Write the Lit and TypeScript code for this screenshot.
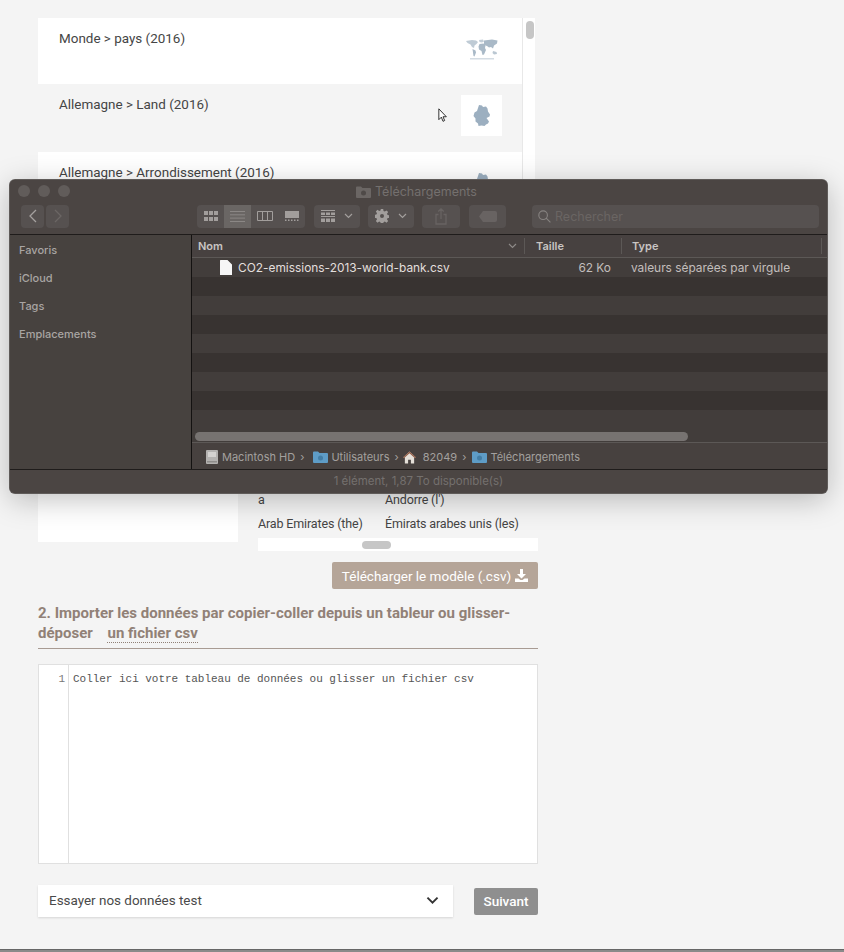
import { css, html, LitElement, svg } from "lit";
import { customElement } from "lit/decorators.js";

const MAP_ROWS = [
  { label: "Monde > pays (2016)", kind: "world", hover: false },
  { label: "Allemagne > Land (2016)", kind: "germany", hover: true },
  { label: "Allemagne > Arrondissement (2016)", kind: "germany", hover: false },
];

const SIDEBAR = ["Favoris", "iCloud", "Tags", "Emplacements"];

const world = svg`<svg class="soft" width="34" height="21" viewBox="0 0 34 21">
  <g fill="#a9b9c7">
    <path d="M1 2l6-1 4 .5 2 1.500-1.500 2-2 1.500-.5 2.500-2-1-1.500-2.500-3-1.500z" opacity=".75"/>
    <path d="M7.500 10l3 1.500.5 2-1.500 4-1-.5-.5-3.500z"/>
    <path d="M14 1l4-.5 1 2-2 1-2.500-.5z" opacity=".7"/>
    <path d="M14.500 5l4-.5 2 2-.5 2.500 1 2-2 4.500-1.500.5-1-4-2.500-1.500-.5-3z"/>
    <path d="M19 1.500l8-1 5.500 1-.5 3-3 2-1 3-2-1.500-2 .5-2-1.500-3-1z"/>
    <path d="M28 12l3.500 1 .5 2-3 .5-1.500-1.500z" opacity=".8"/>
    <rect x="5" y="19" width="24" height="1.500" opacity=".5"/>
  </g>
</svg>`;

const germany = svg`<svg class="soft" width="18" height="22" viewBox="0 0 18 22">
  <path fill="#9cafc0" d="M6 0l3 .5 1 1.500 3-.5 1.500 2 .5 3 2 3-.5 2-3 1.500 2.500 3.500-1 2-2 1-1.500 1.500-3-.5-3 .5-.5-2.500-2.500-2v-3L.5 11l1-3.500L4 6z"/>
</svg>`;

const cursor = svg`<svg width="10" height="15" viewBox="0 0 12 18">
  <path fill="#fff" stroke="#222" stroke-width="1.100" d="M1 1v13l3-3 2 5 2-1-2-4.500h4z"/>
</svg>`;

const chevron = (color: string, w = 9, h = 6, sw = 1.2) => svg`<svg width="${w}" height="${h}" viewBox="0 0 9 6">
  <path fill="none" stroke="${color}" stroke-width="${sw}" d="M1 1l3.500 3.500L8 1"/>
</svg>`;

const gridIcon = svg`<svg width="14" height="10" viewBox="0 0 14 10"><g fill="#a29e9c">
  <rect width="4" height="4"/><rect x="5" width="4" height="4"/><rect x="10" width="4" height="4"/>
  <rect y="6" width="4" height="4"/><rect x="5" y="6" width="4" height="4"/><rect x="10" y="6" width="4" height="4"/>
</g></svg>`;

const listIcon = svg`<svg width="15" height="11" viewBox="0 0 15 11"><g fill="#8b8785">
  <rect width="15" height="1"/><rect y="3.300" width="15" height="1"/><rect y="6.600" width="15" height="1"/><rect y="10" width="15" height="1"/>
</g></svg>`;

const columnsIcon = svg`<svg width="16" height="10" viewBox="0 0 16 10"><path fill="none" stroke="#a29e9c" d="M.5.500h15v9H.500zM5.500.500v9M10.500.500v9"/></svg>`;

const galleryIcon = svg`<svg width="14" height="10" viewBox="0 0 14 10"><g fill="#a29e9c">
  <rect width="14" height="7"/><rect y="8.500" width="1.500" height="1.500"/><rect x="3" y="8.500" width="1.500" height="1.500"/>
  <rect x="6" y="8.500" width="1.500" height="1.500"/><rect x="9" y="8.500" width="1.500" height="1.500"/><rect x="12" y="8.500" width="1.500" height="1.500"/>
</g></svg>`;

const groupIcon = svg`<svg width="14" height="13" viewBox="0 0 14 13"><g fill="#a29e9c">
  <rect width="14" height="1"/>
  <rect y="2.500" width="4" height="2.500"/><rect x="5" y="2.500" width="4" height="2.500"/><rect x="10" y="2.500" width="4" height="2.500"/>
  <rect y="6" width="14" height="1"/>
  <rect y="8.500" width="4" height="3.500"/><rect x="5" y="8.500" width="4" height="3.500"/><rect x="10" y="8.500" width="4" height="3.500"/>
</g></svg>`;

const gearIcon = svg`<svg width="14" height="14" viewBox="0 0 14 14">
  <path fill="#a29e9c" fill-rule="evenodd" d="M5.800 0h2.400l.3 2 1.300.6 1.700-1.200 1.700 1.700-1.200 1.700.6 1.300 2 .3v2.400l-2 .3-.6 1.300 1.200 1.700-1.700 1.700-1.700-1.200-1.300.6-.3 2H5.800l-.3-2-1.300-.6-1.700 1.200-1.700-1.700 1.200-1.700-.6-1.300-2-.3V5.800l2-.3.6-1.300-1.200-1.700 1.700-1.700 1.700 1.200 1.300-.6zM7 5a2 2 0 100 4 2 2 0 000-4z"/>
</svg>`;

const shareIcon = svg`<svg width="12" height="17" viewBox="0 0 12 17">
  <path fill="none" stroke="#686362" stroke-width="1.300" d="M3.500 6.500H1v9.500h10V6.500H8.500M6 11V1M3.200 3.600L6 1l2.800 2.600"/>
</svg>`;

const tagIcon = svg`<svg width="18" height="11" viewBox="0 0 18 11">
  <path fill="#686362" d="M4 0h12a2 2 0 012 2v7a2 2 0 01-2 2H4L0 5.500z"/>
</svg>`;

const searchIcon = svg`<svg width="13" height="13" viewBox="0 0 13 13">
  <path fill="none" stroke="#878381" stroke-width="1.100" d="M8.400 8.400l4 4M9.400 5.200a4.300 4.300 0 11-8.600 0 4.300 4.300 0 018.600 0z"/>
</svg>`;

const folder = (color: string, mark: string) => svg`<svg width="15" height="12" viewBox="0 0 15 12">
  <path fill="${color}" d="M0 1.500A1 1 0 011 .5h4l1.500 1.500H14a1 1 0 011 1V11a1 1 0 01-1 1H1a1 1 0 01-1-1z"/>
  <circle cx="7.500" cy="7" r="2.500" fill="${mark}"/>
</svg>`;

const diskIcon = svg`<svg width="14" height="14" viewBox="0 0 14 14">
  <rect x="1" y="0" width="12" height="14" rx="1" fill="#b4b2b0"/>
  <rect x="3" y="2" width="8" height="5" fill="#d4d2d0"/>
  <rect x="2" y="11" width="10" height="1.500" fill="#8e8c8a"/>
</svg>`;

const homeIcon = svg`<svg class="home" width="13" height="13" viewBox="0 0 14 13">
  <path fill="#e4dfd8" d="M7 0l7 6.500h-2V13H8.500V9h-3v4H2V6.500H0z"/>
  <path fill="#8f5a44" d="M7 0l7 6.500-1 .7L7 2 1 7.200 0 6.500z"/>
</svg>`;

const fileIcon = svg`<svg width="12" height="15" viewBox="0 0 12 15">
  <path fill="#f6f6f6" d="M0 .500A.5.5 0 01.5 0h7L12 4.500V14.500a.5.5 0 01-.5.5H.5a.5.5 0 01-.5-.5z"/>
</svg>`;

const downloadIcon = svg`<svg width="13" height="13" viewBox="0 0 13 13">
  <path fill="#fff" d="M5 0h3v5h3L6.500 9.500 2 5h3zM0 9.500h3.500l2 1.500h2l2-1.500H13V13H0z"/>
</svg>`;

@customElement("app-root")
export class AppRoot extends LitElement {
  private renderMapRow(row: (typeof MAP_ROWS)[number]) {
    return html`<div class="map-row ${row.hover ? "hover" : ""}">
      <span>${row.label}</span>
      ${row.hover ? html`<span class="cursor">${cursor}</span>` : ""}
      <div class="thumb">${row.kind === "world" ? world : germany}</div>
    </div>`;
  }

  private renderFinder() {
    const stripes = Array.from({ length: 8 }, (_, i) => i);
    return html`<section class="finder">
      <header class="finder-top">
        <div class="title-row">
          <div class="lights"><i></i><i></i><i></i></div>
          <div class="title">${folder("#6b6664", "#4f4a48")}<span>Téléchargements</span></div>
        </div>
        <div class="toolbar">
          <div class="nav">
            <div class="tool nav-btn"><svg width="8" height="14" viewBox="0 0 8 14"><path fill="none" stroke="#a5a19f" stroke-width="1.300" d="M7 1L1 7l6 6"/></svg></div>
            <div class="tool nav-btn"><svg width="8" height="14" viewBox="0 0 8 14"><path fill="none" stroke="#6b6664" stroke-width="1.300" d="M1 1l6 6-6 6"/></svg></div>
          </div>
          <div class="tool views">
            <div>${gridIcon}</div>
            <div class="on">${listIcon}</div>
            <div>${columnsIcon}</div>
            <div>${galleryIcon}</div>
          </div>
          <div class="tool menu">${groupIcon}${chevron("#a29e9c")}</div>
          <div class="tool menu">${gearIcon}${chevron("#a29e9c")}</div>
          <div class="tool share">${shareIcon}</div>
          <div class="tool tag">${tagIcon}</div>
          <div class="tool search">${searchIcon}<span>Rechercher</span></div>
        </div>
      </header>
      <div class="finder-body">
        <nav class="sidebar">${SIDEBAR.map((s) => html`<div>${s}</div>`)}</nav>
        <div class="finder-main">
          <div class="cols">
            <div class="col-name"><span>Nom</span>${chevron("#8d8987")}</div>
            <div class="col-size">Taille</div>
            <div class="col-type">Type</div>
          </div>
          <div class="rows">
            <div class="file">
              <div class="file-name">${fileIcon}<span>CO2-emissions-2013-world-bank.csv</span></div>
              <div class="file-size">62 Ko</div>
              <div class="file-type">valeurs séparées par virgule</div>
            </div>
            ${stripes.map((i) => html`<div class="stripe ${i % 2 ? "light" : ""}"></div>`)}
          </div>
          <div class="hscroll"><div></div></div>
          <div class="path">
            ${diskIcon}<span>Macintosh HD</span><b>›</b>
            ${folder("#5e9cc6", "#437ea6")}<span>Utilisateurs</span><b>›</b>
            ${homeIcon}<span>82049</span><b>›</b>
            ${folder("#5e9cc6", "#437ea6")}<span>Téléchargements</span>
          </div>
        </div>
      </div>
      <footer class="status">1 élément, 1,87 To disponible(s)</footer>
    </section>`;
  }

  render() {
    return html`<main class="col">
        <div class="map-list">
          <div class="map-rows">${MAP_ROWS.map((r) => this.renderMapRow(r))}</div>
          <div class="vscroll"><div></div></div>
        </div>
        <div class="templates">
          <div class="side-box"></div>
          <div class="table">
            <div class="tr"><span>a</span><span>Andorre (l')</span></div>
            <div class="tr"><span>Arab Emirates (the)</span><span>Émirats arabes unis (les)</span></div>
            <div class="table-scroll"><div></div></div>
          </div>
        </div>
        <div class="dl-row"><button class="dl">Télécharger le modèle (.csv) ${downloadIcon}</button></div>
        <h2>2. Importer les données par copier-coller depuis un tableur ou glisser-<br />déposer <span class="drop">un fichier csv</span></h2>
        <div class="editor">
          <div class="gutter">1</div>
          <div class="code">Coller ici votre tableau de données ou glisser un fichier csv</div>
        </div>
        <div class="actions">
          <div class="select"><span>Essayer nos données test</span>${chevron("#333", 13, 9, 1.300)}</div>
          <button class="next">Suivant</button>
        </div>
      </main>
      ${this.renderFinder()}
      <div class="edge"></div>`;
  }

  static styles = css`
    :host {
      display: block;
      position: relative;
      height: 952px;
      overflow: hidden;
      background: #f4f4f4;
      font-family: Roboto, sans-serif;
      color: #444;
    }

    svg {
      display: block;
      flex: none;
    }

    .soft {
      filter: blur(0.4px);
    }

    .col {
      width: 500px;
      margin-left: 38px;
      padding-top: 18px;
    }

    .map-list {
      display: flex;
      width: 497px;
      height: 180px;
      overflow: hidden;
    }

    .map-rows {
      width: 484px;
      background: #fff;
    }

    .map-row {
      position: relative;
      display: flex;
      justify-content: space-between;
      height: 66px;
      padding: 12px 20px 0 21px;
      box-sizing: border-box;
      font-size: 13.450px;
      line-height: 17px;
      color: #454545;
    }

    .map-row.hover {
      background: #f4f4f4;
      height: 68px;
    }

    .cursor {
      position: absolute;
      left: 400px;
      top: 24px;
    }

    .thumb {
      display: flex;
      align-items: center;
      justify-content: center;
      width: 41px;
      height: 41px;
      margin-top: -1px;
      flex: none;
      background: #fff;
    }

    .vscroll {
      width: 13px;
      background: #fff;
      border-left: 1px solid #e8e8e8;
      box-sizing: border-box;
      padding: 3px 0 0 3px;
    }

    .vscroll div {
      width: 8px;
      height: 18px;
      border-radius: 4px;
      background: #c6c6c6;
    }

    .templates {
      display: grid;
      grid-template-columns: 200px 280px;
      gap: 20px;
      height: 353px;
    }

    .side-box {
      height: 344px;
      background: #fff;
    }

    .table {
      display: flex;
      flex-direction: column;
      justify-content: flex-end;
      font-size: 12.500px;
      letter-spacing: -0.15px;
    }

    .tr {
      display: grid;
      grid-template-columns: 127px 1fr;
      height: 24px;
      line-height: 24px;
      color: #454545;
      white-space: nowrap;
    }

    .table-scroll {
      height: 13px;
      margin-top: 2px;
      background: #fff;
      padding: 3px 0 0 104px;
      box-sizing: border-box;
    }

    .table-scroll div {
      width: 29px;
      height: 8px;
      border-radius: 4px;
      background: #c6c6c6;
    }

    .dl-row {
      display: flex;
      justify-content: flex-end;
      margin-top: 11px;
    }

    button {
      font-family: inherit;
      border: 0;
      padding: 0;
      color: #fff;
    }

    .dl {
      display: flex;
      align-items: center;
      gap: 4px;
      width: 206px;
      height: 27px;
      justify-content: center;
      border-radius: 2px;
      background: #b5a598;
      font-size: 13.500px;
    }

    h2 {
      margin: 14px 0 0;
      padding-bottom: 5px;
      border-bottom: 1px solid #a89b93;
      font-size: 15px;
      line-height: 20px;
      font-weight: 700;
      color: #918177;
    }

    .drop {
      margin-left: 11px;
      border-bottom: 1px dotted #918177;
    }

    .editor {
      display: flex;
      height: 200px;
      margin-top: 15px;
      background: #fff;
      border: 1px solid #e0e0e0;
      box-sizing: border-box;
      font: 11px/28px "Liberation Mono", monospace;
      color: #555;
    }

    .gutter {
      width: 30px;
      padding-right: 3px;
      box-sizing: border-box;
      text-align: right;
      border-right: 1px solid #e0e0e0;
      color: #777;
    }

    .code {
      padding-left: 4px;
      letter-spacing: -0.03px;
    }

    .actions {
      display: flex;
      align-items: center;
      justify-content: space-between;
      margin-top: 21px;
    }

    .select {
      display: flex;
      align-items: center;
      justify-content: space-between;
      width: 415px;
      height: 32px;
      padding: 0 14px 2px 11px;
      box-sizing: border-box;
      background: #fff;
      box-shadow: 0 1px 2px rgba(0, 0, 0, 0.12);
      font-size: 13.450px;
      color: #4a4a4a;
    }

    .next {
      width: 64px;
      height: 27px;
      border-radius: 2px;
      background: #8f8f8f;
      font-size: 13.500px;
      font-weight: 500;
    }

    .edge {
      position: absolute;
      left: 0;
      right: 0;
      bottom: 0;
      height: 3px;
      background: #8a8a8a;
      border-top: 1px solid #666;
      box-sizing: border-box;
    }

    .finder {
      position: absolute;
      left: 10px;
      top: 180px;
      width: 817px;
      height: 313px;
      display: flex;
      flex-direction: column;
      border-radius: 5px;
      overflow: hidden;
      background: #4a4442;
      box-shadow: 0 0 0 1px #5f5b59, 0 6px 30px rgba(0, 0, 0, 0.26);
      font-family: Inter, sans-serif;
      font-size: 11px;
      color: #a9a5a3;
    }

    .finder-top {
      height: 55px;
      flex: none;
      box-sizing: border-box;
      padding: 0 8px 0 11px;
      background: #4b4543;
      border-bottom: 1px solid #1f1c1b;
    }

    .title-row {
      position: relative;
      display: flex;
      align-items: center;
      height: 24px;
    }

    .lights {
      display: flex;
      gap: 8px;
      margin-left: -3px;
      margin-top: -2px;
    }

    .lights i {
      width: 12px;
      height: 12px;
      border-radius: 50%;
      background: #615c5a;
    }

    .title {
      position: absolute;
      left: 335px;
      top: 5px;
      display: flex;
      align-items: center;
      gap: 4px;
      font-size: 12.500px;
      line-height: 14px;
      color: #74706e;
    }

    .toolbar {
      display: flex;
      align-items: center;
      height: 24px;
    }

    .tool {
      display: flex;
      align-items: center;
      justify-content: center;
      height: 23px;
      border-radius: 4px;
      background: #565150;
      flex: none;
    }

    .nav {
      display: flex;
      gap: 2px;
      width: 176px;
    }

    .nav-btn {
      width: 23px;
    }

    .views {
      width: 108px;
      overflow: hidden;
      margin-right: 9px;
    }

    .views div {
      display: flex;
      flex: 1;
      height: 100%;
      align-items: center;
      justify-content: center;
    }

    .views .on {
      background: #6a6664;
    }

    .menu {
      width: 46px;
      gap: 9px;
      margin-right: 8px;
    }

    .share {
      width: 38px;
      margin-right: 9px;
    }

    .tag {
      width: 37px;
      margin-right: 26px;
    }

    .search {
      width: 287px;
      justify-content: flex-start;
      gap: 4px;
      padding-left: 6px;
      box-sizing: border-box;
      font-size: 12.500px;
      color: #6a6563;
    }

    .finder-body {
      flex: 1;
      display: flex;
      min-height: 0;
    }

    .sidebar {
      width: 182px;
      flex: none;
      box-sizing: border-box;
      padding: 1px 0 0 9px;
      background: #47423f;
      border-right: 1px solid #141211;
      font-weight: 500;
    }

    .sidebar div {
      height: 28px;
      line-height: 28px;
    }

    .finder-main {
      flex: 1;
      display: flex;
      flex-direction: column;
      min-width: 0;
    }

    .cols,
    .file {
      display: grid;
      grid-template-columns: 333px 97px 1fr;
    }

    .cols {
      height: 23px;
      flex: none;
      background: #474140;
      border-bottom: 1px solid #5c5856;
      box-sizing: border-box;
      font-weight: 600;
      color: #c9c5c3;
    }

    .cols > div {
      height: 16px;
      margin-top: 3px;
      line-height: 16px;
      box-sizing: border-box;
    }

    .col-name {
      display: flex;
      align-items: center;
      justify-content: space-between;
      padding: 0 7px 0 6px;
      border-right: 1px solid #5c5856;
    }

    .col-size {
      padding-left: 11px;
      border-right: 1px solid #5c5856;
    }

    .col-type {
      padding-left: 10px;
      margin-right: 5px;
      border-right: 1px solid #5c5856;
    }

    .rows {
      flex: none;
      height: 171px;
      overflow: hidden;
    }

    .file {
      height: 19px;
      align-items: center;
      background: #423d3b;
      font-size: 11.900px;
      color: #c2bebc;
    }

    .file-name {
      display: flex;
      align-items: center;
      gap: 6px;
      padding-left: 28px;
      color: #e2dfdd;
      white-space: nowrap;
    }

    .file-size {
      text-align: right;
      padding-right: 11px;
    }

    .file-type {
      padding-left: 9px;
      white-space: nowrap;
    }

    .stripe {
      height: 19px;
      background: #383331;
    }

    .stripe.light {
      background: #423d3b;
    }

    .hscroll {
      height: 14px;
      flex: none;
      box-sizing: border-box;
      padding: 3px 0 0 3px;
      background: #423d3b;
      border-bottom: 1px solid #5c5856;
    }

    .hscroll div {
      width: 493px;
      height: 9px;
      border-radius: 5px;
      background: #777371;
    }

    .path {
      flex: 1;
      display: flex;
      align-items: center;
      gap: 3px;
      padding: 2px 0 0 13px;
      background: #47413f;
      font-size: 11px;
      color: #a3a09e;
    }

    .path b {
      font-weight: 400;
      margin: 0 3px 0 2px;
    }

    .path b:nth-of-type(1) {
      margin-right: 6px;
    }

    .path b:nth-of-type(2) {
      margin-right: 1px;
    }

    .home {
      margin-right: 4px;
    }

    .status {
      height: 24px;
      flex: none;
      box-sizing: border-box;
      line-height: 23px;
      text-align: center;
      background: #4b4543;
      border-top: 1px solid #1f1c1b;
      font-size: 11.500px;
      color: #74706e;
    }
  `;
}
